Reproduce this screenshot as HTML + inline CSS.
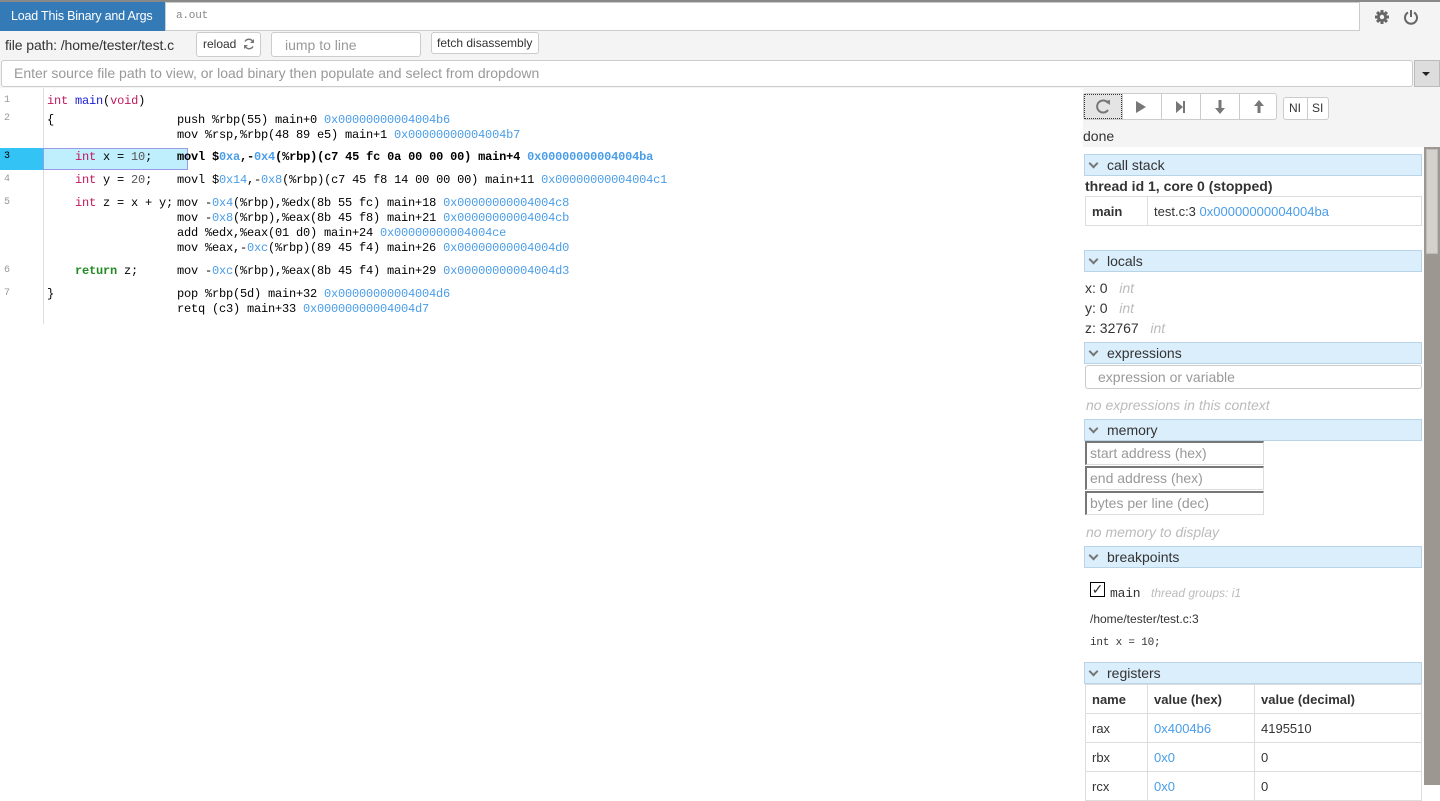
<!DOCTYPE html>
<html><head><meta charset="utf-8"><style>
*{box-sizing:border-box;margin:0;padding:0}
body{width:1440px;height:785px;overflow:hidden;background:#fff;font-family:"Liberation Sans",sans-serif;color:#333;position:relative;font-size:14px}
.a{position:absolute}
.m{font-family:"Liberation Mono",monospace;font-size:12px;letter-spacing:-0.2px;white-space:pre;color:#000}
.b{color:#4a9de8}
.k{color:#c2185b}
.f{color:#1b1bd6}
.n{color:#555}
.ln{color:#999;font-family:"Liberation Mono",monospace;font-size:10px}
.hd{position:absolute;left:1084px;width:338px;height:22px;background:#dbeefc;border:1px solid #b9d4e6;font-size:14px;color:#333;line-height:20px;padding-left:22px}
.hd:before{content:"";position:absolute;left:5px;top:5px;width:5px;height:5px;border-right:2.5px solid #777;border-bottom:2.5px solid #777;transform:rotate(45deg)}
.gi{color:#bbb;font-style:italic;font-size:14px}
.inp{position:absolute;border:1px solid #ccc;border-radius:3px;background:#fff;color:#999}
.mi{position:absolute;left:1085px;width:179px;height:24px;border:1px solid #ddd;border-left:2px solid #777;border-top:2px solid #777;color:#999;font-size:14px;padding-left:3px;line-height:20px}
td{border:1px solid #ddd;font-size:13px;padding-left:6px;height:29px}
</style></head><body>
<div class="a" style="left:0;top:0;width:1440px;height:88px;background:#f4f4f4"></div>
<div class="a" style="left:0;top:0;width:1440px;height:2px;background:#888"></div>
<div class="a" style="left:0;top:2px;width:165px;height:29px;background:#337ab7;color:#fff;font-size:12.5px;line-height:29px;padding-left:11px;letter-spacing:-0.2px">Load This Binary and Args</div>
<div class="a" style="left:165px;top:2px;width:1195px;height:29px;background:#fff;border:1px solid #ccc;"></div>
<div class="a m" style="left:176px;top:10px;color:#888;font-size:11px">a.out</div>
<svg class="a" style="left:1374px;top:9px" width="16" height="16" viewBox="0 0 16 16"><g fill="#666"><circle cx="8" cy="8" r="5"/><rect x="6.5" y="1" width="3" height="14"/><rect x="1" y="6.5" width="14" height="3"/><rect x="6.5" y="1" width="3" height="14" transform="rotate(45 8 8)"/><rect x="6.5" y="1" width="3" height="14" transform="rotate(-45 8 8)"/></g><circle cx="8" cy="8" r="2.2" fill="#f4f4f4"/></svg>
<svg class="a" style="left:1403px;top:9px" width="16" height="16" viewBox="0 0 16 16"><path d="M5 3.5A6 6 0 1 0 11 3.5" fill="none" stroke="#666" stroke-width="2"/><path d="M8 1v7" stroke="#666" stroke-width="2"/></svg>
<div class="a" style="left:5px;top:37px;font-size:14px;letter-spacing:-0.1px">file path: /home/tester/test.c</div>
<div class="a" style="left:196px;top:32px;width:65px;height:25px;border:1px solid #ccc;border-radius:3px;background:#fff;font-size:12px;line-height:23px;padding-left:6px">reload</div>
<svg class="a" style="left:242px;top:37px" width="14" height="14" viewBox="0 0 14 14"><path d="M11 5A4.5 4.5 0 0 0 3 4.5M3 9A4.5 4.5 0 0 0 11 9.5" fill="none" stroke="#777" stroke-width="1.5"/><path d="M12 2v4h-4zM2 12v-4h4z" fill="#777"/></svg>
<div class="inp" style="left:271px;top:32px;width:150px;height:25px;font-size:14px;line-height:24px;padding-left:13px">iump to line</div>
<div class="a" style="left:431px;top:32px;width:108px;height:22px;border:1px solid #ccc;border-radius:3px;background:#fff;font-size:12px;line-height:20px;padding-left:5px">fetch disassembly</div>
<div class="inp" style="left:1px;top:60px;width:1412px;height:27px;font-size:14px;line-height:25px;padding-left:12px">Enter source file path to view, or load binary then populate and select from dropdown</div>
<div class="a" style="left:1414px;top:60px;width:26px;height:27px;background:#ddd;border:1px solid #bbb"></div>
<div class="a" style="left:1422px;top:72px;border-left:4px solid transparent;border-right:4px solid transparent;border-top:4px solid #222"></div>

<div class="a" style="left:43px;top:88px;width:1px;height:236px;background:#ddd"></div>
<div class="a" style="left:0;top:148px;width:43px;height:22px;background:#33c4f5"></div>
<div class="a" style="left:43px;top:148px;width:145px;height:22px;background:#bfeefc;border:1px solid #9a9ae8"></div>
<div class="a ln" style="left:4px;top:95px">1</div>
<div class="a ln" style="left:4px;top:113px">2</div>
<div class="a ln" style="left:4px;top:151px;color:#000">3</div>
<div class="a ln" style="left:4px;top:174px">4</div>
<div class="a ln" style="left:4px;top:197px">5</div>
<div class="a ln" style="left:4px;top:265px">6</div>
<div class="a ln" style="left:4px;top:288px">7</div>
<div class="a m" style="left:47px;top:94px"><span class="k">int</span> <span class="f">main</span>(<span class="k">void</span>)</div>
<div class="a m" style="left:47px;top:113px">{</div>
<div class="a m" style="left:47px;top:150px">    <span class="k">int</span> x = <span class="n">10</span>;</div>
<div class="a m" style="left:47px;top:173px">    <span class="k">int</span> y = <span class="n">20</span>;</div>
<div class="a m" style="left:47px;top:196px">    <span class="k">int</span> z = x + y;</div>
<div class="a m" style="left:47px;top:264px">    <b style="color:#228b22">return</b> z;</div>
<div class="a m" style="left:47px;top:287px">}</div>
<div class="a m" style="left:177px;top:113px;line-height:15px">push %rbp(55) main+0 <span class="b">0x00000000004004b6</span>
mov %rsp,%rbp(48 89 e5) main+1 <span class="b">0x00000000004004b7</span></div>
<div class="a m" style="left:177px;top:150px;font-weight:bold">movl $<span class="b">0xa</span>,-<span class="b">0x4</span>(%rbp)(c7 45 fc 0a 00 00 00) main+4 <span class="b">0x00000000004004ba</span></div>
<div class="a m" style="left:177px;top:173px">movl $<span class="b">0x14</span>,-<span class="b">0x8</span>(%rbp)(c7 45 f8 14 00 00 00) main+11 <span class="b">0x00000000004004c1</span></div>
<div class="a m" style="left:177px;top:196px;line-height:15px">mov -<span class="b">0x4</span>(%rbp),%edx(8b 55 fc) main+18 <span class="b">0x00000000004004c8</span>
mov -<span class="b">0x8</span>(%rbp),%eax(8b 45 f8) main+21 <span class="b">0x00000000004004cb</span>
add %edx,%eax(01 d0) main+24 <span class="b">0x00000000004004ce</span>
mov %eax,-<span class="b">0xc</span>(%rbp)(89 45 f4) main+26 <span class="b">0x00000000004004d0</span></div>
<div class="a m" style="left:177px;top:264px">mov -<span class="b">0xc</span>(%rbp),%eax(8b 45 f4) main+29 <span class="b">0x00000000004004d3</span></div>
<div class="a m" style="left:177px;top:287px;line-height:15px">pop %rbp(5d) main+32 <span class="b">0x00000000004004d6</span>
retq (c3) main+33 <span class="b">0x00000000004004d7</span></div>

<!-- right panel -->
<div class="a" style="left:1083px;top:88px;width:357px;height:59px;background:#f4f4f4"></div>
<div class="a" style="left:1083px;top:93px;width:194px;height:27px;border:1px solid #ccc;border-radius:3px;background:#fff"></div>
<div class="a" style="left:1084px;top:94px;width:38px;height:25px;background:#e4e4e4;border:1px dotted #333"></div>
<div class="a" style="left:1122px;top:94px;width:1px;height:25px;background:#ccc"></div>
<div class="a" style="left:1161px;top:94px;width:1px;height:25px;background:#ccc"></div>
<div class="a" style="left:1200px;top:94px;width:1px;height:25px;background:#ccc"></div>
<div class="a" style="left:1239px;top:94px;width:1px;height:25px;background:#ccc"></div>
<svg class="a" style="left:1084px;top:94px" width="194" height="25" viewBox="0 0 194 25"><g fill="#777" stroke="#777"><path d="M24 9A6 6 0 1 0 24 16" fill="none" stroke-width="2"/><path d="M21 7l5-1 0 5z" stroke="none"/><path d="M52 7l10 6-10 6z" stroke="none"/><path d="M92 7l7 6-7 6z" stroke="none"/><rect x="99" y="7" width="2" height="12" stroke="none"/><path d="M136 6v10" stroke-width="3" fill="none"/><path d="M131 14h10l-5 6z" stroke="none"/><path d="M175 19v-9" stroke-width="3" fill="none"/><path d="M170 12h10l-5-6z" stroke="none"/></g></svg>
<div class="a" style="left:1283px;top:97px;width:46px;height:23px;border:1px solid #ccc;border-radius:3px;background:#fff;font-size:12px;line-height:21px"><span style="position:absolute;left:5px">NI</span><span style="position:absolute;left:23px;top:0;height:21px;border-left:1px solid #ccc;padding-left:4px">SI</span></div>
<div class="a" style="left:1083px;top:128px;font-size:14px">done</div>
<div class="a" style="left:1424px;top:147px;width:16px;height:638px;background:#9c9891"></div>
<div class="a" style="left:1426px;top:149px;width:12px;height:105px;background:#d4d1cc;border:1px solid #bbb"></div>

<div class="hd" style="top:154px">call stack</div>
<div class="a" style="left:1085px;top:178px;font-weight:bold;font-size:14px">thread id 1, core 0 (stopped)</div>
<table class="a" style="left:1085px;top:196px;width:337px;border-collapse:collapse"><tr><td style="width:62px;font-weight:bold">main</td><td>test.c:3 <span class="b">0x00000000004004ba</span></td></tr></table>
<div class="hd" style="top:250px">locals</div>
<div class="a" style="left:1085px;top:278px;font-size:14px;line-height:20px">x: 0 &nbsp;&nbsp;<span class="gi">int</span><br>y: 0 &nbsp;&nbsp;<span class="gi">int</span><br>z: 32767 &nbsp;&nbsp;<span class="gi">int</span></div>
<div class="hd" style="top:342px">expressions</div>
<div class="inp" style="left:1085px;top:365px;width:337px;height:24px;font-size:14px;line-height:22px;padding-left:12px">expression or variable</div>
<div class="a gi" style="left:1086px;top:397px">no expressions in this context</div>
<div class="hd" style="top:419px">memory</div>
<div class="mi" style="top:441px">start address (hex)</div>
<div class="mi" style="top:466px">end address (hex)</div>
<div class="mi" style="top:491px">bytes per line (dec)</div>
<div class="a gi" style="left:1086px;top:524px">no memory to display</div>
<div class="hd" style="top:546px">breakpoints</div>
<div class="a" style="left:1090px;top:582px;width:15px;height:15px;border:1.5px solid #000;font-size:14px;line-height:12px;text-align:center">&#10003;</div>
<div class="a m" style="left:1110px;top:586px;color:#333;font-size:13px">main</div>
<div class="a gi" style="left:1151px;top:586px;font-size:12px">thread groups: i1</div>
<div class="a" style="left:1090px;top:612px;font-size:12px">/home/tester/test.c:3</div>
<div class="a m" style="left:1090px;top:637px;color:#333;font-size:11px">int x = 10;</div>
<div class="hd" style="top:662px">registers</div>
<table class="a" style="left:1085px;top:684px;width:337px;border-collapse:collapse">
<tr><td style="width:62px;font-weight:bold">name</td><td style="width:107px;font-weight:bold">value (hex)</td><td style="font-weight:bold">value (decimal)</td></tr>
<tr><td>rax</td><td class="b">0x4004b6</td><td>4195510</td></tr>
<tr><td>rbx</td><td class="b">0x0</td><td>0</td></tr>
<tr><td>rcx</td><td class="b">0x0</td><td>0</td></tr>
</table>
</body></html>
